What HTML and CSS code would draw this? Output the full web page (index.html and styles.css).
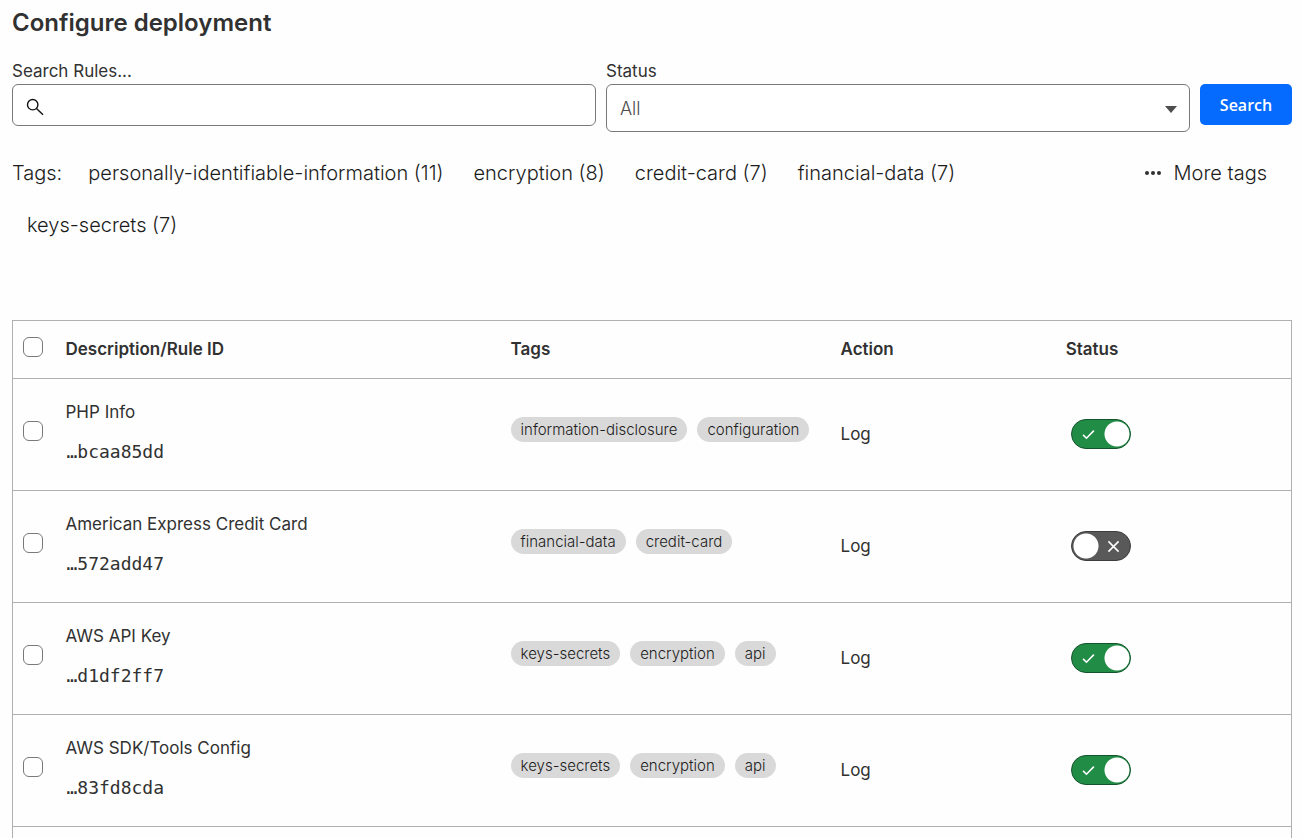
FILE: index.html
```html
<!DOCTYPE html>
<html lang="en">
<head>
    <meta charset="UTF-8">
    <meta name="viewport" content="width=device-width, initial-scale=1.0">
    <title>Configure deployment</title>
    <link rel="stylesheet" href="styles.css">
</head>
<body>
    <!-- shared icons for the toggles -->
    <svg class="sprite" aria-hidden="true">
        <symbol id="check" viewBox="0 0 14 14"><path d="M1.2 7.4 4.8 11 12.8 2.8"/></symbol>
        <symbol id="cross" viewBox="0 0 14 14"><path d="M1.5 1.5 12.5 12.5M12.5 1.5 1.5 12.5"/></symbol>
    </svg>

    <main class="page">
        <h1 class="title">Configure deployment</h1>

        <form class="filters">
            <div class="field">
                <label for="search">Search Rules...</label>
                <div class="control">
                    <svg class="search-icon" viewBox="0 0 18 18" aria-hidden="true">
                        <circle cx="6.7" cy="6.7" r="5.2"/>
                        <path d="M10.5 10.5 17 16.8"/>
                    </svg>
                    <input class="search-input" type="text" id="search">
                </div>
            </div>
            <div class="field">
                <label for="status">Status</label>
                <div class="control">
                    <select class="status-select" id="status">
                        <option>All</option>
                    </select>
                    <span class="arrow"></span>
                </div>
            </div>
            <button class="search-btn" type="button">Search</button>
        </form>

        <div class="tag-bar">
            <div class="tag-list">
                <span class="tag-label">Tags:</span>
                <button class="tag-btn" type="button">personally-identifiable-information (11)</button>
                <button class="tag-btn" type="button">encryption (8)</button>
                <button class="tag-btn" type="button">credit-card (7)</button>
                <button class="tag-btn" type="button">financial-data (7)</button>
                <button class="tag-btn" type="button">keys-secrets (7)</button>
            </div>
            <button class="more-btn" type="button">
                <svg class="dots" viewBox="0 0 18 6" aria-hidden="true">
                    <circle cx="3" cy="3" r="2"/><circle cx="9" cy="3" r="2"/><circle cx="15" cy="3" r="2"/>
                </svg>
                More tags
            </button>
        </div>

        <table class="rules">
            <colgroup>
                <col class="col-check">
                <col class="col-desc">
                <col class="col-tags">
                <col class="col-action">
                <col>
            </colgroup>
            <thead>
                <tr>
                    <th class="check-cell"><input class="box" type="checkbox" aria-label="Select all rules"></th>
                    <th>Description/Rule ID</th>
                    <th>Tags</th>
                    <th>Action</th>
                    <th>Status</th>
                </tr>
            </thead>
            <tbody>
                <tr>
                    <td class="check-cell"><input class="box" type="checkbox" aria-label="Select PHP Info"></td>
                    <td class="desc-cell">
                        <div class="rule-name">PHP Info</div>
                        <code class="rule-id">…bcaa85dd</code>
                    </td>
                    <td class="tags-cell">
                        <div class="pills"><span class="pill">information-disclosure</span><span class="pill">configuration</span></div>
                    </td>
                    <td>Log</td>
                    <td>
                        <label class="toggle">
                            <input type="checkbox" role="switch" aria-label="PHP Info status" checked>
                            <svg class="mark on"><use href="#check"/></svg>
                            <svg class="mark off"><use href="#cross"/></svg>
                        </label>
                    </td>
                </tr>
                <tr>
                    <td class="check-cell"><input class="box" type="checkbox" aria-label="Select American Express Credit Card"></td>
                    <td class="desc-cell">
                        <div class="rule-name">American Express Credit Card</div>
                        <code class="rule-id">…572add47</code>
                    </td>
                    <td class="tags-cell">
                        <div class="pills"><span class="pill">financial-data</span><span class="pill">credit-card</span></div>
                    </td>
                    <td>Log</td>
                    <td>
                        <label class="toggle">
                            <input type="checkbox" role="switch" aria-label="American Express Credit Card status">
                            <svg class="mark on"><use href="#check"/></svg>
                            <svg class="mark off"><use href="#cross"/></svg>
                        </label>
                    </td>
                </tr>
                <tr>
                    <td class="check-cell"><input class="box" type="checkbox" aria-label="Select AWS API Key"></td>
                    <td class="desc-cell">
                        <div class="rule-name">AWS API Key</div>
                        <code class="rule-id">…d1df2ff7</code>
                    </td>
                    <td class="tags-cell">
                        <div class="pills"><span class="pill">keys-secrets</span><span class="pill">encryption</span><span class="pill">api</span></div>
                    </td>
                    <td>Log</td>
                    <td>
                        <label class="toggle">
                            <input type="checkbox" role="switch" aria-label="AWS API Key status" checked>
                            <svg class="mark on"><use href="#check"/></svg>
                            <svg class="mark off"><use href="#cross"/></svg>
                        </label>
                    </td>
                </tr>
                <tr>
                    <td class="check-cell"><input class="box" type="checkbox" aria-label="Select AWS SDK/Tools Config"></td>
                    <td class="desc-cell">
                        <div class="rule-name">AWS SDK/Tools Config</div>
                        <code class="rule-id">…83fd8cda</code>
                    </td>
                    <td class="tags-cell">
                        <div class="pills"><span class="pill">keys-secrets</span><span class="pill">encryption</span><span class="pill">api</span></div>
                    </td>
                    <td>Log</td>
                    <td>
                        <label class="toggle">
                            <input type="checkbox" role="switch" aria-label="AWS SDK/Tools Config status" checked>
                            <svg class="mark on"><use href="#check"/></svg>
                            <svg class="mark off"><use href="#cross"/></svg>
                        </label>
                    </td>
                </tr>
                <tr class="spacer">
                    <td colspan="5"></td>
                </tr>
            </tbody>
        </table>
    </main>
</body>
</html>
```
FILE: styles.css
```css
* {
    margin: 0;
    padding: 0;
    box-sizing: border-box;
}

body {
    background: #fefefe;
    color: #313131;
    font-family: Inter, "Liberation Sans", sans-serif;
    font-size: 17px;
    line-height: 24px;
}

button,
input,
select {
    font: inherit;
    color: inherit;
}

button {
    border: none;
    background: none;
    cursor: pointer;
}

.sprite {
    display: none;
}

.page {
    padding: 7px 10px 0 12px;
}

.title {
    font-size: 24px;
    font-weight: 600;
    line-height: 32px;
    margin-bottom: 20px;
}

/* Search form */
.filters {
    display: flex;
    gap: 10px;
}

.field {
    flex: 1;
}

.field label {
    display: block;
    margin-bottom: 1px;
}

.control {
    position: relative;
}

.search-input,
.status-select {
    display: block;
    width: 100%;
    border: 1px solid #797979;
    border-radius: 6px;
    background: #fff;
}

.search-input {
    height: 42px;
    padding: 0 12px 0 42px;
}

.search-icon {
    position: absolute;
    top: 14px;
    left: 14px;
    width: 18px;
    height: 18px;
    fill: none;
    stroke: #111;
    stroke-width: 1.4;
}

.status-select {
    height: 48px;
    padding: 1px 40px 0 13px;
    appearance: none;
    color: #4d4d4d;
    font-size: 18px;
    font-weight: 300;
}

.arrow {
    position: absolute;
    top: 22px;
    right: 13px;
    border: 6px solid transparent;
    border-top: 7px solid #4d4d4d;
    border-bottom: none;
    pointer-events: none;
}

.search-btn {
    width: 92px;
    height: 41px;
    margin-top: 25px;
    border-radius: 5px;
    background: #056bff;
    color: #fff;
    font-family: "Open Sans", "Noto Sans", sans-serif;
    font-weight: 600;
    font-size: 16px;
}

/* Tags */
.tag-bar {
    display: flex;
    justify-content: space-between;
    align-items: flex-start;
    margin: 15px 0 69px;
    color: #1c1c1c;
    font-size: 20px;
    font-weight: 300;
    line-height: 52px;
}

.tag-list {
    display: flex;
    flex-wrap: wrap;
}

.tag-label {
    margin-right: 11px;
}

.tag-btn {
    padding: 0 15px;
}

.more-btn {
    display: flex;
    flex-shrink: 0;
    align-items: center;
    gap: 12px;
    padding: 0 25px 0 15px;
}

.dots {
    width: 18px;
    height: 6px;
    fill: #313131;
}

/* Rules table */
.rules {
    width: 100%;
    table-layout: fixed;
    border-collapse: collapse;
    border: 1px solid #b0b0b0;
}

.col-check {
    width: 43px;
}

.col-desc {
    width: 34.8%;
}

.col-tags {
    width: 25.8%;
}

.col-action {
    width: 17.6%;
}

.rules tr {
    height: 112px;
    border-bottom: 1px solid #b0b0b0;
}

.rules thead tr {
    height: 58px;
}

.rules .spacer {
    height: 40px;
}

.rules th,
.rules td {
    padding: 0 10px 2px;
    text-align: left;
    vertical-align: middle;
}

.rules th {
    font-weight: 600;
}

.rules th.check-cell {
    padding-bottom: 5px;
}

.rules td.check-cell {
    padding-bottom: 8px;
}

.rules .desc-cell {
    padding-bottom: 6px;
}

.rules .tags-cell {
    padding-bottom: 11px;
}

.box {
    display: block;
    width: 20px;
    height: 20px;
    appearance: none;
    border: 1px solid #797979;
    border-radius: 6px;
    background: #fff;
}

.box:checked {
    background: #056bff;
}

.rule-name {
    margin-bottom: 16px;
}

.rule-id {
    display: block;
    padding-left: 1px;
    font-family: "DejaVu Sans Mono", monospace;
    font-size: 18px;
}

.pills {
    display: flex;
    flex-wrap: wrap;
    gap: 10px;
}

.pill {
    padding: 0 10px;
    border-radius: 13px;
    background: #d9d9d9;
    color: #1c1c1c;
    font-size: 15px;
    font-weight: 300;
    line-height: 25px;
}

/* Status toggle */
.toggle {
    position: relative;
    display: block;
    width: 60px;
    height: 30px;
    margin-left: 5px;
}

.toggle input {
    display: block;
    width: 60px;
    height: 30px;
    appearance: none;
    border: 1px solid #3d3d3d;
    border-radius: 15px;
    background: radial-gradient(circle at 14px 14px, #fff 12px, #595959 13px);
}

.toggle input:checked {
    border-color: #14532d;
    background: radial-gradient(circle at 45px 14px, #fff 12px, #218c46 13px);
}

.mark {
    position: absolute;
    top: 9px;
    width: 13px;
    height: 13px;
    fill: none;
    stroke: #fff;
    stroke-width: 1.7;
    pointer-events: none;
}

.on {
    left: 11px;
}

.off {
    left: 36px;
}

.toggle input:checked ~ .off,
.toggle input:not(:checked) ~ .on {
    display: none;
}
```
